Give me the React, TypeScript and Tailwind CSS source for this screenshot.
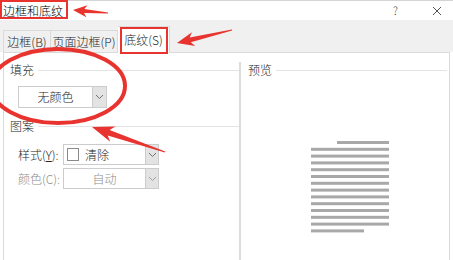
import React from 'react';

const FONT = { fontFamily: '"Microsoft YaHei", "Noto Sans CJK SC", "Noto Sans", sans-serif' };

// tapered annotation arrow: tip -> tail
function arrowPoints(tx: number, ty: number, ex: number, ey: number, head: number, half: number) {
  const dx = ex - tx;
  const dy = ey - ty;
  const len = Math.hypot(dx, dy);
  const ux = dx / len;
  const uy = dy / len;
  const nx = -uy;
  const ny = ux;
  const p = (a: number, b: number) => `${(tx + ux * a + nx * b).toFixed(1)},${(ty + uy * a + ny * b).toFixed(1)}`;
  return [
    p(0, 0),
    p(head, half),
    p(head * 0.8, half * 0.35),
    p(len, 0.6),
    p(len, -0.6),
    p(head * 0.8, -half * 0.35),
    p(head, -half),
  ].join(' ');
}

const Chevron = ({ muted }: { muted?: boolean }) => (
  <svg width="9" height="6" viewBox="0 0 9 6">
    <path d="M1 1l3.5 3.5L8 1" fill="none" stroke={muted ? '#a0a0a0' : '#707070'} strokeWidth="1" />
  </svg>
);

const Select = ({ children, muted, center }: { children: React.ReactNode; muted?: boolean; center?: boolean }) => (
  <div className="flex h-[21px] w-[96px] border border-[#cccccc] bg-white">
    <div className={`flex flex-1 items-center ${center ? 'justify-center' : 'pl-[3px]'} ${muted ? 'text-[#8e8e8e]' : 'text-[#262626]'}`}>
      {children}
    </div>
    <div className="flex w-[13px] items-center justify-center border-l border-[#cccccc] bg-[#e3e3e3]">
      <Chevron muted={muted} />
    </div>
  </div>
);

const Group = ({ label }: { label: string }) => (
  <div className="flex items-center gap-[4px]">
    <span className="leading-[14px] text-[#262626]">{label}</span>
    <div className="h-px flex-1 bg-[#e4e4e4]" />
  </div>
);

export default function App() {
  const lines = Array.from({ length: 12 });
  return (
    <div className="relative h-[260px] w-[453px] overflow-hidden bg-white text-[12px] font-light" style={FONT}>
      {/* title bar */}
      <div className="flex h-[20px] items-center border-t border-[#d4d4d4] pl-[3px] pr-[8px]">
        <span className="text-[12px] leading-[14px] text-black">边框和底纹</span>
        <span className="ml-auto mr-[34px] text-[11px] text-[#333]">?</span>
        <svg width="10" height="10" viewBox="0 0 10 10" className="mr-[3px]">
          <path d="M1 1l8 8M9 1l-8 8" stroke="#555" strokeWidth="1" />
        </svg>
      </div>

      {/* tab strip */}
      <div className="flex h-[32px] items-end bg-[#f0f0f0] pl-[3px]">
        <div className="flex h-[22px] w-[48px] items-center justify-center border-l border-r border-t border-[#dadada] text-[#262626]">
          边框(B)
        </div>
        <div className="flex h-[22px] w-[67px] items-center justify-center border-r border-t border-[#dadada] text-[#262626]">
          页面边框(P)
        </div>
        <div className="-mb-px flex h-[27px] w-[52px] items-center justify-center border-r border-t border-[#dadada] bg-white text-[#262626]">
          底纹(S)
        </div>
      </div>

      {/* content */}
      <div className="mx-[3px] flex h-[208px] border-l border-r border-t border-[#dadada]">
        <div className="flex w-[235px] flex-col pl-[6px] pt-[10px]">
          <Group label="填充" />
          <div className="ml-[8px] mt-[9px] flex h-[22px] w-[89px] border border-[#cccccc]">
            <div className="flex flex-1 items-center justify-center text-[#262626]">无颜色</div>
            <div className="flex w-[14px] items-center justify-center border-l border-[#cccccc] bg-[#e3e3e3]">
              <Chevron />
            </div>
          </div>
          <div className="mt-[11px]">
            <Group label="图案" />
          </div>
          <div className="mt-[11px] flex items-center">
            <span className="w-[53px] pl-[8px] text-[#262626]">样式(<span className="underline">Y</span>):</span>
            <Select>
              <div className="mr-[6px] h-[13px] w-[12px] border border-[#8a8a8a] bg-white" />
              <span>清除</span>
            </Select>
          </div>
          <div className="mt-[3px] flex items-center">
            <span className="w-[53px] pl-[8px] text-[#8e8e8e]">颜色(C):</span>
            <Select muted center>
              自动
            </Select>
          </div>
        </div>

        <div className="mt-[9px] w-[2px] bg-[#dcdcdc]" />

        <div className="flex flex-1 flex-col pl-[7px] pr-[2px] pt-[10px]">
          <Group label="预览" />
          <svg width="80" height="95" viewBox="0 0 80 95" className="ml-[63px] mt-[64px]">
            <rect x="26" y="0" width="52" height="3" fill="#a8a8a8" />
            {lines.map((_, i) => (
              <rect key={i} x="0" y={6.8 * (i + 1)} width="78" height="3" fill="#a8a8a8" />
            ))}
            <rect x="0" y={6.8 * 13} width="53" height="3" fill="#a8a8a8" />
          </svg>
        </div>
      </div>

      {/* red annotations */}
      <svg className="pointer-events-none absolute left-0 top-0" width="453" height="260" viewBox="0 0 453 260">
        <rect x="1" y="1" width="66" height="17" fill="none" stroke="#e8332e" strokeWidth="2" />
        <rect x="121" y="28" width="46" height="25" fill="none" stroke="#e8332e" strokeWidth="2" />
        <ellipse cx="58" cy="86" rx="67" ry="37" fill="none" stroke="#e8332e" strokeWidth="4" />
        <polygon points={arrowPoints(73, 10, 108, 13, 14, 6)} fill="#e8332e" />
        <polygon points={arrowPoints(177, 43, 232, 30, 17, 7)} fill="#e8332e" />
        <polygon points={arrowPoints(92, 127, 165, 152, 22, 8)} fill="#e8332e" />
      </svg>
    </div>
  );
}
